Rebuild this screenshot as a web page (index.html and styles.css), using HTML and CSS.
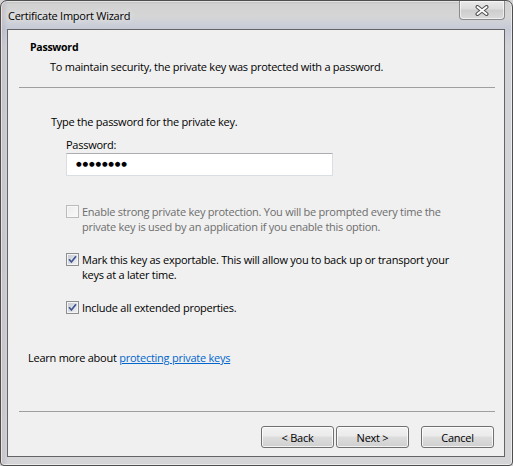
FILE: index.html
```html
<!DOCTYPE html>
<html lang="en">
<head>
  <meta charset="UTF-8" />
  <title>Certificate Import Wizard</title>
  <link rel="stylesheet" href="styles.css">
</head>
<body>
  <div class="window">
    <div class="titlebar">
      <span class="title">Certificate Import Wizard</span>
      <div class="close">
        <svg width="16" height="11" viewBox="0 0 16 11">
          <path d="M3.5 2 L12.5 9 M12.5 2 L3.5 9" stroke="#4f4f4f" stroke-width="4" stroke-linecap="round" />
          <path d="M3.5 2 L12.5 9 M12.5 2 L3.5 9" stroke="#ffffff" stroke-width="2" stroke-linecap="round" />
        </svg>
      </div>
    </div>

    <div class="client">
      <div class="header">
        <div class="heading">Password</div>
        <div class="subheading">To maintain security, the private key was protected with a password.</div>
      </div>
      <div class="rule"></div>

      <div class="content">
        <p class="intro">Type the password for the private key.</p>
        <div class="field">
          <label class="field-label">Password:</label>
          <div class="textbox"><span class="dots">●●●●●●●●</span></div>
        </div>

        <div class="options">
          <div class="check disabled">
            <span class="box"></span>
            <span class="check-text">Enable strong private key protection. You will be prompted every time the<br>private key is used by an application if you enable this option.</span>
          </div>
          <div class="check">
            <span class="box checked">
              <svg width="9" height="9" viewBox="0 0 9 9"><path d="M1 4.3 L3.4 7 L8 1.3" fill="none" stroke="#3d5590" stroke-width="1.7" /></svg>
            </span>
            <span class="check-text">Mark this key as exportable. This will allow you to back up or transport your<br>keys at a later time.</span>
          </div>
          <div class="check">
            <span class="box checked">
              <svg width="9" height="9" viewBox="0 0 9 9"><path d="M1 4.3 L3.4 7 L8 1.3" fill="none" stroke="#3d5590" stroke-width="1.7" /></svg>
            </span>
            <span class="check-text">Include all extended properties.</span>
          </div>
        </div>

        <p class="learn">Learn more about <a href="#">protecting private keys</a></p>
      </div>

      <div class="rule bottom"></div>
      <div class="buttons">
        <button class="btn">&lt; Back</button>
        <button class="btn">Next &gt;</button>
        <button class="btn cancel">Cancel</button>
      </div>
    </div>
  </div>
</body>
</html>
```

FILE: styles.css
```css
body {
  margin: 0;
  font-family: 'Open Sans', 'Noto Sans', sans-serif;
  font-size: 11px;
  letter-spacing: -0.25px;
  line-height: 15px;
  color: #000;
  background: #d4d4d6;
}

.window {
  width: 513px;
  height: 466px;
  box-sizing: border-box;
  display: flex;
  flex-direction: column;
  padding: 0 7px 8px 6px;
  border: 1px solid #4e4e4e;
  border-radius: 7px 7px 4px 4px;
  background:
    linear-gradient(to right, rgba(190,120,120,0.25) 0, rgba(150,170,200,0.2) 4px, rgba(0,0,0,0) 7px),
    linear-gradient(to bottom, #bcbcbc 0, #d2d2d2 3px, #d5d5d5 15px, #cdd0d8 22px, #c6cad6 28px, #d2d3d8 45px, #d5d5d7 100%);
  box-shadow: inset 0 0 0 1px rgba(255,255,255,0.55);
}

.titlebar {
  height: 28px;
  display: flex;
  align-items: flex-start;
}

.title {
  padding: 7px 0 0 1px;
  text-shadow: 0 0 6px rgba(255,255,255,0.9);
}

.close {
  margin-left: auto;
  width: 46px;
  height: 19px;
  box-sizing: border-box;
  display: flex;
  align-items: center;
  justify-content: center;
  border: 1px solid #8a8a8a;
  border-top: none;
  border-radius: 0 0 4px 4px;
  background: linear-gradient(#e9e9e9, #dcdcdc 45%, #cdcdcd 50%, #dadada);
  box-shadow: inset 0 0 0 1px rgba(255,255,255,0.6);
}

.client {
  flex: 1;
  border: 1px solid #646464;
  background: #f0f0f0;
}

.header {
  padding: 10px 0 0 22px;
}

.heading {
  font-weight: bold;
  font-size: 10.5px;
}

.subheading {
  margin-top: 4px;
  padding-left: 20px;
}

.rule {
  margin: 13px 9px 0 11px;
  border-top: 1px solid #a0a0a0;
}

.content {
  padding-left: 43px;
}

.intro {
  margin: 26px 0 0;
}

.field {
  padding-left: 15px;
}

.field-label {
  display: block;
  margin-top: 8px;
}

.textbox {
  width: 267px;
  height: 23px;
  box-sizing: border-box;
  margin-top: 1px;
  padding-left: 9px;
  display: flex;
  align-items: center;
  background: #fff;
  border: 1px solid #dadde3;
  border-top-color: #abadb3;
}

.dots {
  font-family: 'DejaVu Sans', sans-serif;
  font-size: 6.5px;
  letter-spacing: 0.8px;
}

.options {
  padding-left: 15px;
  margin-top: 28px;
}

.check {
  display: flex;
  align-items: flex-start;
  margin-bottom: 18px;
}

.check .box {
  width: 13px;
  height: 13px;
  box-sizing: border-box;
  margin: 1px 3px 0 0;
  flex-shrink: 0;
  display: flex;
  align-items: center;
  justify-content: center;
  border: 1px solid #8e8f8f;
  background: linear-gradient(135deg, #c4c9d1, #f3f3f4);
  box-shadow: inset 0 0 0 1px #f4f4f4;
}

.check.disabled .box {
  border-color: #bcbcbc;
  background: linear-gradient(135deg, #ececec, #f9f9f9);
  box-shadow: inset 0 0 0 1px #f7f7f7;
}

.check.disabled .check-text {
  color: #6d6d6d;
}

.learn {
  margin: 35px 0 0 -23px;
}

.learn a {
  color: #0066cc;
}

.rule.bottom {
  margin-top: 46px;
}

.buttons {
  display: flex;
  justify-content: flex-end;
  padding: 14px 10px 0 0;
}

.btn {
  width: 73px;
  height: 22px;
  margin-left: 2px;
  padding: 0;
  font-family: inherit;
  font-size: 11px;
  letter-spacing: -0.25px;
  color: #000;
  border: 1px solid #707070;
  border-radius: 3px;
  background: linear-gradient(#f2f2f2, #ebebeb 45%, #dddddd 50%, #cfcfcf);
  box-shadow: inset 0 0 0 1px rgba(255,255,255,0.75);
}

.btn.cancel {
  margin-left: 12px;
}
```
